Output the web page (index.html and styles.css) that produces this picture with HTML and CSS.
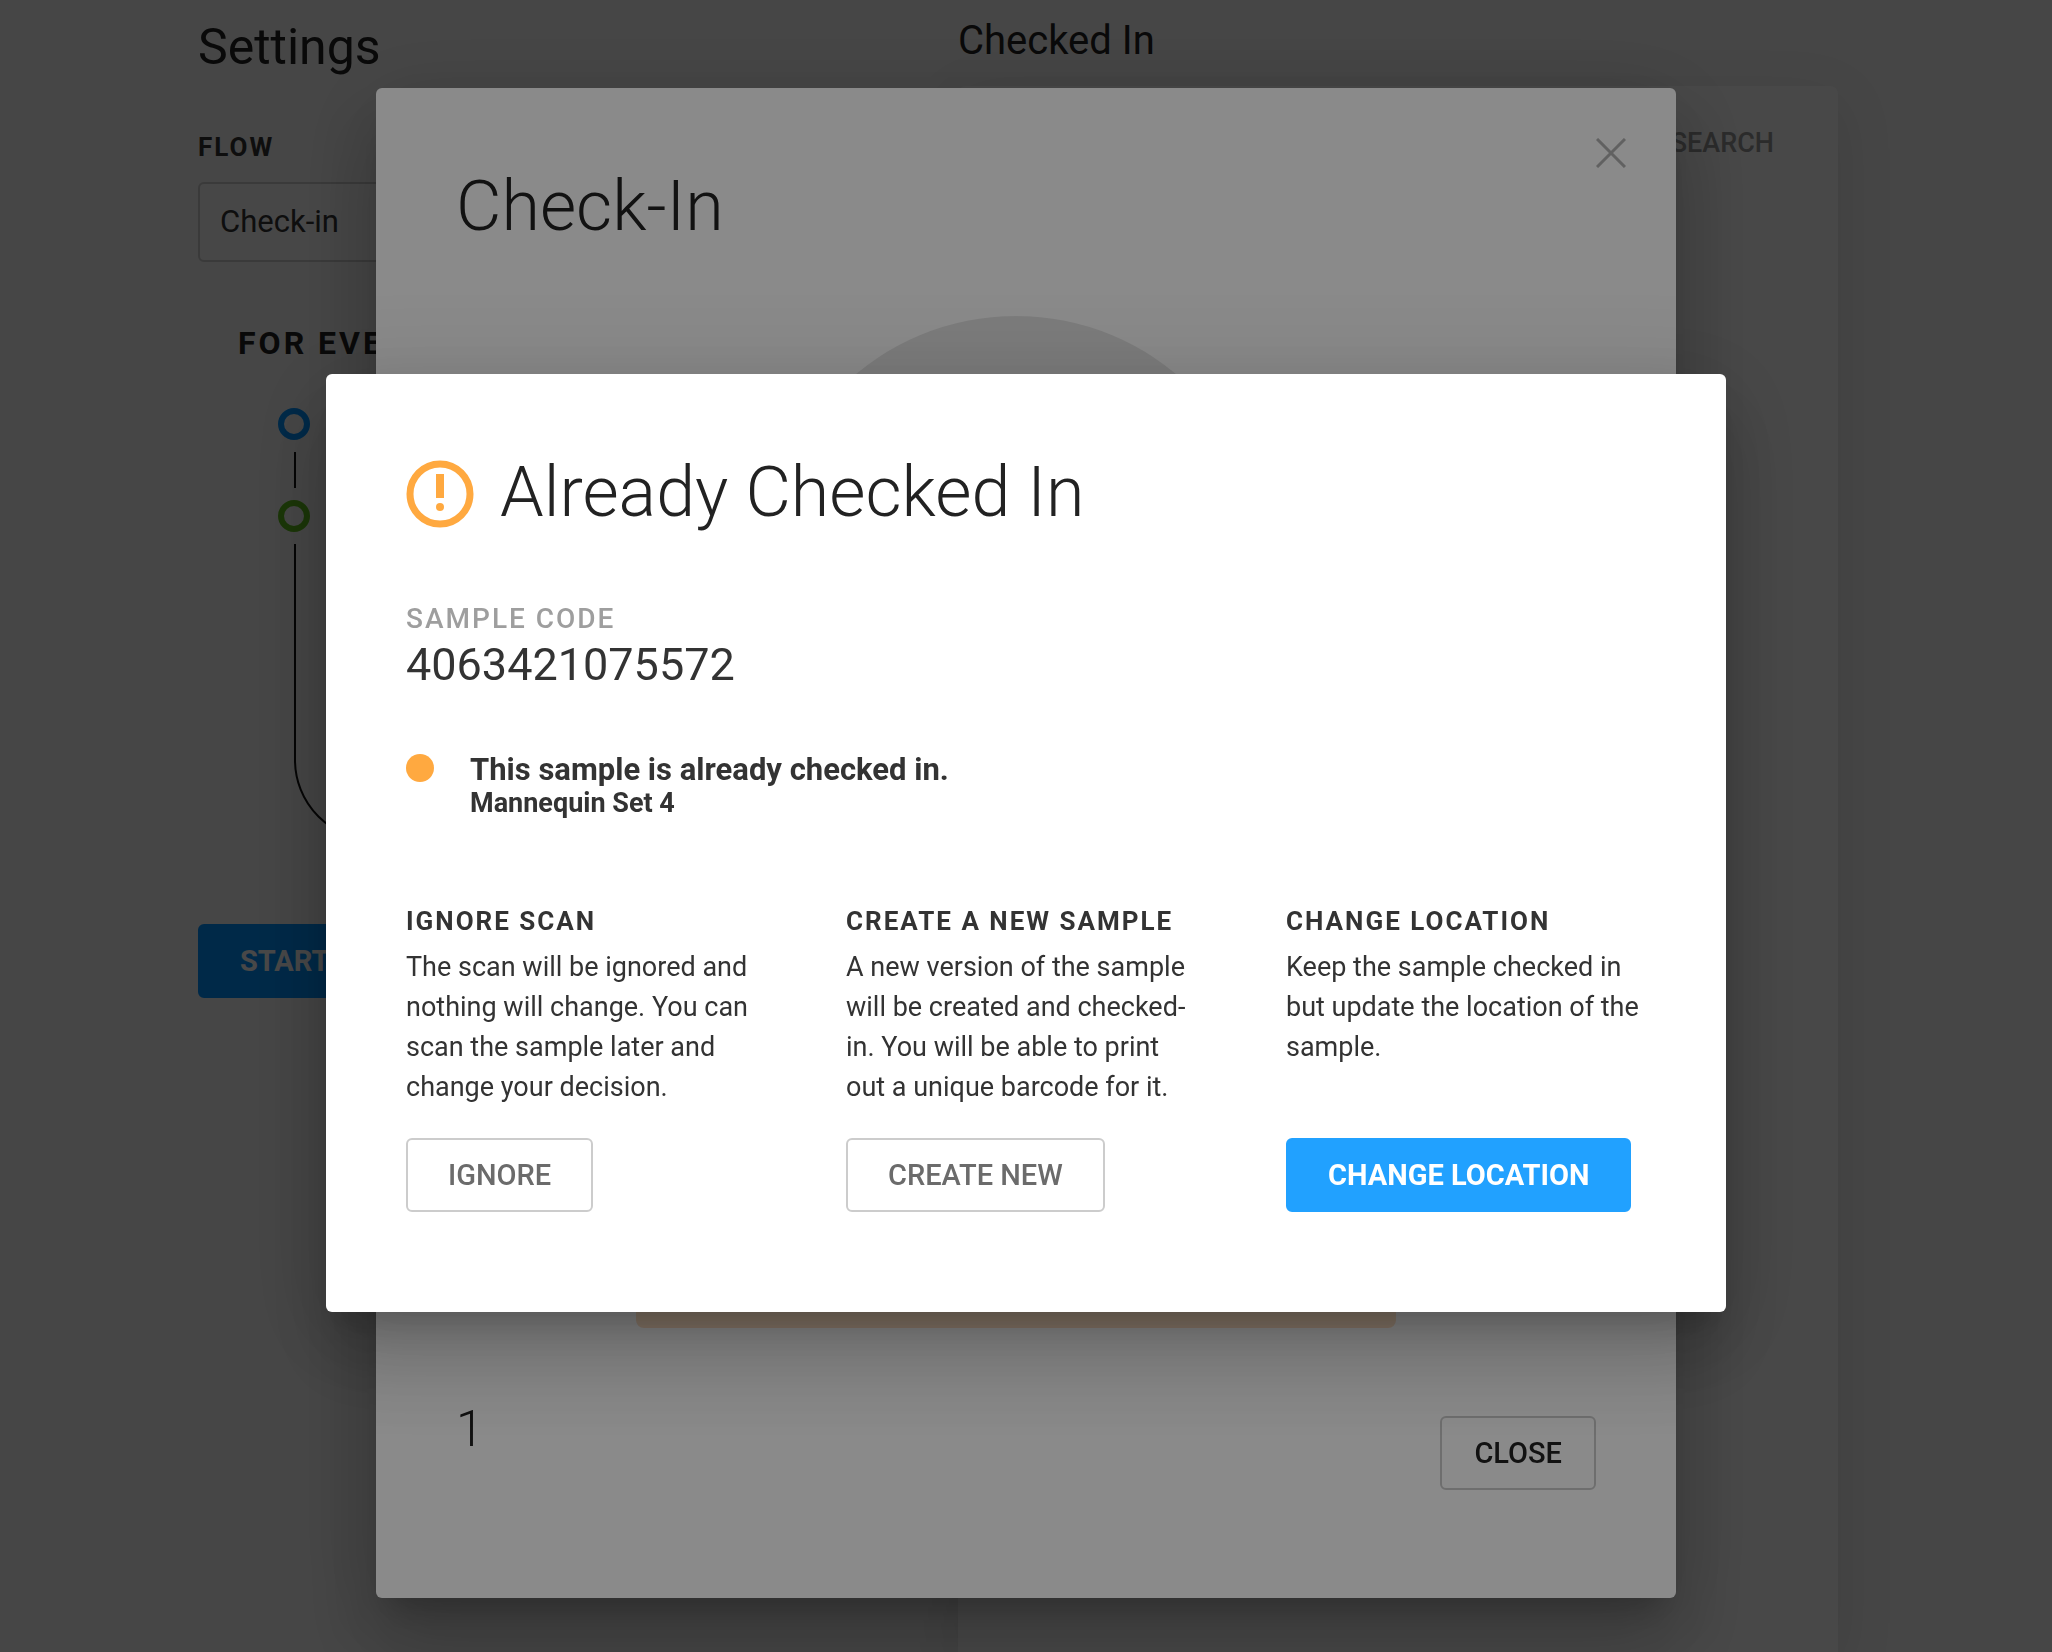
FILE: index.html
```html
<!DOCTYPE html>
<html lang="en">

<head>
    <meta charset="UTF-8">
    <meta name="viewport" content="width=device-width, initial-scale=1.0">
    <title>Check-In</title>
    <link rel="stylesheet" href="styles.css">
</head>

<body>
    <main class="page">
        <section class="settings">
            <h1 class="settings-title">Settings</h1>
            <label class="label" for="flow">FLOW</label>
            <select class="select" id="flow">
                <option>Check-in</option>
            </select>
            <h2 class="flow-title">FOR EVERY SAMPLE</h2>
            <svg class="flow-steps" width="400" height="440" viewBox="0 0 400 440" fill="none" aria-hidden="true">
                <circle cx="16" cy="16" r="13" stroke="#0092ff" stroke-width="6" />
                <path d="M17 44V80" stroke="#111" stroke-width="2" />
                <circle cx="16" cy="108" r="13" stroke="#5fbf1c" stroke-width="6" />
                <path d="M17 136V352a80 80 0 0 0 80 80H340" stroke="#111" stroke-width="2" />
            </svg>
            <button class="btn btn-primary btn-start">START</button>
        </section>

        <section class="results">
            <h2 class="results-title">Checked In</h2>
            <div class="card">
                <button class="search">SEARCH</button>
            </div>
        </section>
    </main>

    <div class="overlay overlay-back">
        <div class="modal modal-checkin" role="dialog" aria-labelledby="checkin-title">
            <button class="modal-close" aria-label="Close">
                <svg width="30" height="30" viewBox="0 0 30 30" stroke="#b3b3b3" stroke-width="3">
                    <path d="M1 1L29 29M29 1L1 29" />
                </svg>
            </button>
            <h1 class="title" id="checkin-title">Check-In</h1>
            <div class="scan">
                <div class="scan-circle"></div>
                <div class="scan-notice"></div>
            </div>
            <div class="modal-footer">
                <span class="count">1</span>
                <button class="btn btn-close">CLOSE</button>
            </div>
        </div>
    </div>

    <div class="overlay">
        <div class="modal modal-alert" role="dialog" aria-labelledby="alert-title">
            <div class="alert-header">
                <svg width="68" height="72" viewBox="0 0 68 72" fill="none" aria-hidden="true">
                    <circle cx="34" cy="38" r="30" stroke="#ffa940" stroke-width="7" />
                    <path d="M30 18H38V42H30Z" fill="#ffa940" />
                    <circle cx="34" cy="51" r="4" fill="#ffa940" />
                </svg>
                <h1 class="title" id="alert-title">Already Checked In</h1>
            </div>

            <div class="code-label">SAMPLE CODE</div>
            <div class="code">4063421075572</div>

            <div class="status">
                <span class="status-dot"></span>
                <div>
                    <div class="status-text">This sample is already checked in.</div>
                    <div class="status-set">Mannequin Set 4</div>
                </div>
            </div>

            <div class="choices">
                <div class="choice">
                    <h2 class="choice-title">IGNORE SCAN</h2>
                    <p class="choice-text">The scan will be ignored and nothing will change. You can scan the sample later and change your decision.</p>
                    <button class="btn">IGNORE</button>
                </div>
                <div class="choice">
                    <h2 class="choice-title">CREATE A NEW SAMPLE</h2>
                    <p class="choice-text">A new version of the sample will be created and checked-in. You will be able to print out a unique barcode for it.</p>
                    <button class="btn">CREATE NEW</button>
                </div>
                <div class="choice">
                    <h2 class="choice-title">CHANGE LOCATION</h2>
                    <p class="choice-text">Keep the sample checked in but update the location of the sample.</p>
                    <button class="btn btn-primary">CHANGE LOCATION</button>
                </div>
            </div>
        </div>
    </div>
</body>

</html>
```
FILE: styles.css
```css
* {
    box-sizing: border-box;
}

body {
    margin: 0;
    font-family: Roboto, sans-serif;
    color: #333;
    background-color: #f6f6f6;
    overflow: hidden;
}

h1,
h2,
p {
    margin: 0;
}

button,
select {
    font-family: inherit;
    cursor: pointer;
}

/* page */
.page {
    display: grid;
    grid-template-columns: 35fr 44fr;
    column-gap: 60px;
    min-height: 100vh;
    padding: 0 214px 0 198px;
}

.settings {
    display: flex;
    flex-direction: column;
    align-items: flex-start;
    padding-top: 18px;
}

.settings-title {
    font-size: 50px;
    line-height: 58px;
    font-weight: 400;
    color: #222;
    margin-bottom: 55px;
}

.label {
    font-size: 26px;
    line-height: 32px;
    font-weight: 700;
    letter-spacing: 2px;
    margin-bottom: 19px;
}

.select {
    appearance: none;
    width: 100%;
    height: 80px;
    padding: 0 20px 2px;
    border: 2px solid #ccc;
    border-radius: 6px;
    background-color: #fafafa;
    font-size: 31px;
    color: #333;
}

.flow-title {
    font-size: 32px;
    line-height: 38px;
    font-weight: 700;
    letter-spacing: 3px;
    color: #222;
    margin: 62px 0 46px 40px;
}

.flow-steps {
    margin: 0 0 76px 80px;
}

.results {
    display: flex;
    flex-direction: column;
    padding-top: 16px;
}

.results-title {
    font-size: 40px;
    line-height: 50px;
    font-weight: 400;
    color: #222;
    margin-bottom: 20px;
}

.card {
    flex: 1;
    display: flex;
    justify-content: flex-end;
    align-items: flex-start;
    padding: 40px 64px;
    border-radius: 8px 8px 0 0;
    background-color: #fff;
    box-shadow: 0 16px 60px rgba(0, 0, 0, 0.1);
}

.search {
    padding: 0;
    border: none;
    background: none;
    font-size: 27px;
    line-height: 34px;
    font-weight: 500;
    color: #999;
}

/* buttons */
.btn {
    height: 74px;
    padding: 0 40px;
    border: 2px solid #ccc;
    border-radius: 6px;
    background-color: #fff;
    font-size: 29px;
    font-weight: 500;
    color: #6b6b6b;
}

.btn-primary {
    border-color: #21a1ff;
    background-color: #21a1ff;
    font-weight: 700;
    color: #fff;
}

.btn-start {
    border-color: #0092ff;
    background-color: #0092ff;
}

.btn-close {
    padding: 0 32px;
    color: #222;
}

/* modals */
.overlay {
    position: fixed;
    inset: 0;
    display: flex;
    justify-content: center;
    align-items: center;
    padding-top: 34px;
    background-color: rgba(0, 0, 0, 0.46);
}

.overlay-back {
    background-color: rgba(0, 0, 0, 0.48);
}

.modal {
    display: flex;
    flex-direction: column;
    width: 100%;
    padding: 76px 80px 100px;
    border-radius: 6px;
    background-color: #fff;
    box-shadow: 0 22px 30px -14px rgba(0, 0, 0, 0.2),
        0 48px 76px 6px rgba(0, 0, 0, 0.14),
        0 18px 92px 16px rgba(0, 0, 0, 0.12);
}

.modal-checkin {
    position: relative;
    max-width: 1300px;
    height: calc(100vh - 142px);
    padding-bottom: 108px;
}

.modal-alert {
    max-width: 1400px;
}

.modal-close {
    position: absolute;
    top: 50px;
    right: 50px;
    display: flex;
    padding: 0;
    border: none;
    background: none;
}

.title {
    font-size: 70px;
    line-height: 84px;
    font-weight: 300;
    color: #222;
}

.scan {
    flex: 1;
    display: flex;
    flex-direction: column;
    justify-content: space-between;
    align-items: center;
    padding-right: 20px;
    margin: 68px 0 88px;
}

.scan-circle {
    width: 500px;
    height: 500px;
    border-radius: 50%;
    background-color: #e6e6e6;
}

.scan-notice {
    width: 760px;
    height: 120px;
    border-radius: 8px;
    background-color: #ffe2c6;
}

.modal-footer {
    display: flex;
    justify-content: space-between;
}

.count {
    font-size: 50px;
    line-height: 26px;
    font-weight: 300;
    color: #222;
}

.alert-header {
    display: flex;
    align-items: center;
    gap: 26px;
    margin-bottom: 68px;
}

.code-label {
    font-size: 28px;
    line-height: 34px;
    font-weight: 500;
    letter-spacing: 2px;
    color: #9e9e9e;
    margin-bottom: 2px;
}

.code {
    font-size: 45px;
    line-height: 54px;
}

.status {
    display: flex;
    gap: 36px;
    margin: 60px 0 87px;
    font-weight: 700;
}

.status-dot {
    width: 28px;
    height: 28px;
    margin-top: 2px;
    border-radius: 50%;
    background-color: #ffa940;
}

.status-text {
    font-size: 31px;
    line-height: 36px;
}

.status-set {
    font-size: 27px;
    line-height: 30px;
}

.choices {
    display: grid;
    grid-template-columns: repeat(3, 1fr);
    column-gap: 80px;
}

.choice {
    display: flex;
    flex-direction: column;
    align-items: flex-start;
}

.choice-title {
    font-size: 26px;
    line-height: 32px;
    font-weight: 700;
    letter-spacing: 2px;
    margin-bottom: 10px;
}

.choice-text {
    flex: 1;
    padding-right: 4px;
    font-size: 27px;
    line-height: 40px;
    margin-bottom: 31px;
}
```
